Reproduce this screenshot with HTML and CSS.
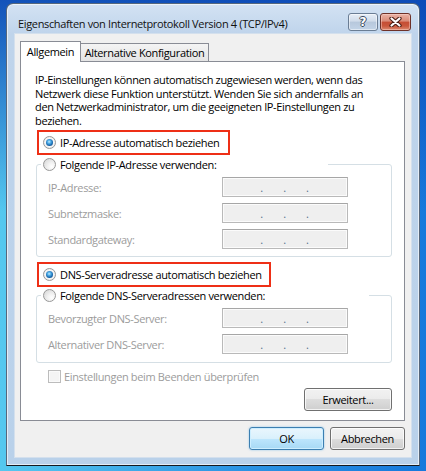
FILE: index.html
```html
<!DOCTYPE html>
<html lang="de">
<head>
    <meta charset="UTF-8">
    <meta name="viewport" content="width=device-width, initial-scale=1.0">
    <title>Eigenschaften von Internetprotokoll Version 4 (TCP/IPv4)</title>
    <link rel="stylesheet" href="styles.css">
</head>
<body>
    <div class="window">
        <div class="titlebar">
            <span class="title">Eigenschaften von Internetprotokoll Version 4 (TCP/IPv4)</span>
            <div class="caption-buttons">
                <button class="cap-btn help">?</button>
                <button class="cap-btn close">
                    <svg width="13" height="10" viewBox="0 0 13 10">
                        <path d="M2.5 1.5 L10.5 8.5 M10.5 1.5 L2.5 8.5" stroke="#4a1c14" stroke-width="4.2" stroke-linecap="round"/>
                        <path d="M2.5 1.5 L10.5 8.5 M10.5 1.5 L2.5 8.5" stroke="#ffffff" stroke-width="2.2" stroke-linecap="round"/>
                    </svg>
                </button>
            </div>
        </div>

        <div class="client">
            <div class="tabs">
                <div class="tab active">Allgemein</div>
                <div class="tab">Alternative Konfiguration</div>
            </div>

            <div class="panel">
                <p class="intro">
                    IP-Einstellungen können automatisch zugewiesen werden, wenn das<br>
                    Netzwerk diese Funktion unterstützt. Wenden Sie sich andernfalls an<br>
                    den Netzwerkadministrator, um die geeigneten IP-Einstellungen zu<br>
                    beziehen.
                </p>

                <div class="mark mark-ip">
                    <label class="option"><span class="radio on"></span>IP-Adresse automatisch beziehen</label>
                </div>

                <div class="group">
                    <label class="option group-title title-ip"><span class="radio"></span>Folgende IP-Adresse verwenden:</label>
                    <div class="field">
                        <span class="field-label">IP-Adresse:</span>
                        <span class="ip-box"><i>.</i><i>.</i><i>.</i></span>
                    </div>
                    <div class="field">
                        <span class="field-label">Subnetzmaske:</span>
                        <span class="ip-box"><i>.</i><i>.</i><i>.</i></span>
                    </div>
                    <div class="field">
                        <span class="field-label">Standardgateway:</span>
                        <span class="ip-box"><i>.</i><i>.</i><i>.</i></span>
                    </div>
                </div>

                <div class="mark mark-dns">
                    <label class="option"><span class="radio on"></span>DNS-Serveradresse automatisch beziehen</label>
                </div>

                <div class="group group-dns">
                    <label class="option group-title title-dns"><span class="radio"></span>Folgende DNS-Serveradressen verwenden:</label>
                    <div class="field">
                        <span class="field-label">Bevorzugter DNS-Server:</span>
                        <span class="ip-box"><i>.</i><i>.</i><i>.</i></span>
                    </div>
                    <div class="field">
                        <span class="field-label">Alternativer DNS-Server:</span>
                        <span class="ip-box"><i>.</i><i>.</i><i>.</i></span>
                    </div>
                </div>

                <label class="check-row"><span class="checkbox"></span>Einstellungen beim Beenden überprüfen</label>

                <div class="panel-actions">
                    <button class="btn btn-wide">Erweitert...</button>
                </div>
            </div>

            <div class="dialog-actions">
                <button class="btn default">OK</button>
                <button class="btn">Abbrechen</button>
            </div>
        </div>
    </div>
</body>
</html>
```

FILE: styles.css
```css
* {
    box-sizing: border-box;
}

body {
    margin: 0;
    width: 426px;
    height: 471px;
    overflow: hidden;
    padding: 3px 0 0 6px;
    font-family: 'Open Sans', 'Noto Sans', sans-serif;
    font-size: 11px;
    letter-spacing: -0.35px;
    color: #000;
    background:
        linear-gradient(to bottom, rgba(12, 70, 180, 0.9) 0%, rgba(12, 70, 180, 0) 45%),
        linear-gradient(to right, #55c8ef 0%, #2d95e4 55%, #1679dc 100%);
}

.window {
    width: 414px;
    height: 463px;
    display: flex;
    flex-direction: column;
    padding: 0 7px 7px 7px;
    border: 1px solid #56677c;
    border-bottom-color: #151a20;
    border-radius: 7px 7px 0 0;
    background: linear-gradient(#d3e2f3, #bfd4eb 30px, #b9d1ea);
    box-shadow: inset 0 0 0 1px rgba(255, 255, 255, 0.6);
}

/* title bar */
.titlebar {
    height: 29px;
    display: flex;
    justify-content: space-between;
    align-items: flex-start;
    padding-right: 1px;
}

.title {
    padding: 12px 0 0 4px;
    line-height: 15px;
    color: #111;
    white-space: nowrap;
}

.caption-buttons {
    display: flex;
    gap: 2px;
    padding-top: 9px;
}

.cap-btn {
    height: 18px;
    padding: 0;
    border-radius: 3px;
    display: flex;
    align-items: center;
    justify-content: center;
}

.help {
    width: 30px;
    border: 1px solid #6a7d94;
    background: linear-gradient(#e6eef7, #d0dcea 45%, #b7c8dc 50%, #c2d4e7);
    box-shadow: inset 0 0 0 1px rgba(255, 255, 255, 0.5);
    font-family: 'DejaVu Sans', sans-serif;
    font-weight: bold;
    font-size: 12px;
    color: #fff;
    text-shadow: 1px 0 #3b4a5e, -1px 0 #3b4a5e, 0 1px #3b4a5e, 0 -1px #3b4a5e;
}

.close {
    width: 31px;
    border: 1px solid #6e3128;
    background: linear-gradient(#eab3a6, #d98a77 45%, #c54d34 50%, #c9573c 75%, #dc8c73);
    box-shadow: inset 0 0 0 1px rgba(255, 220, 210, 0.45);
}

/* client area */
.client {
    flex: 1;
    background: #f0f0f0;
    border: 1px solid #d4e0ed;
    padding: 7px 6px 7px 5px;
}

.tabs {
    display: flex;
    align-items: flex-start;
    height: 21px;
    position: relative;
    z-index: 1;
}

.tab {
    height: 18px;
    margin-top: 2px;
    margin-left: -1px;
    width: 129px;
    text-align: center;
    line-height: 17px;
    white-space: nowrap;
    border: 1px solid #898c95;
    border-bottom: none;
    background: linear-gradient(#f4f4f4, #ececec 50%, #e4e4e4);
}

.tab.active {
    height: 21px;
    width: 61px;
    margin: 0;
    line-height: 20px;
    background: #fff;
    position: relative;
    z-index: 1;
}

.panel {
    height: 360px;
    margin-top: -1px;
    background: #fff;
    border: 1px solid #898c95;
}

.intro {
    margin: 11px 0 0 14px;
    line-height: 13.5px;
    white-space: nowrap;
}

.option {
    display: flex;
    align-items: center;
    gap: 4px;
    height: 14px;
    white-space: nowrap;
}

.radio {
    width: 13px;
    height: 13px;
    flex: none;
    display: grid;
    place-items: center;
    border-radius: 50%;
    border: 1px solid #989898;
    background: radial-gradient(circle at 70% 70%, #ffffff 0, #f2f2f2 35%, #d2d2d2 100%);
}

.radio.on {
    background: radial-gradient(circle at 50% 50%, #ffffff 0, #f4f4f4 60%, #dcdcdc 100%);
}

.radio.on::after {
    content: "";
    width: 7px;
    height: 7px;
    border-radius: 50%;
    background: radial-gradient(circle at 45% 40%, #c4ebff 0, #4eace6 30%, #1462a8 65%, #0c3f70 100%);
}

/* red annotation frames */
.mark {
    display: flex;
    align-items: center;
    height: 25px;
    margin-left: 16px;
    padding-left: 4px;
    border: 2px solid #ee2f16;
}

.mark-ip {
    width: 193px;
    margin-top: 3px;
}

.mark-dns {
    width: 234px;
    margin-top: 5px;
}

.group {
    margin: 9px 12px 0 15px;
    padding: 0 0 7px 11px;
    border: 1px solid #d5dfe5;
    border-radius: 3px;
}

.group-dns {
    margin-top: 8px;
    padding-bottom: 8px;
}

.group-title {
    margin: -8px 0 0 -7px;
    padding-left: 2px;
    background: #fff;
}

.title-ip {
    width: 287px;
}

.title-dns {
    width: 328px;
}

.field {
    display: flex;
    align-items: center;
    height: 20px;
    margin-top: 6px;
    color: #9c9c9c;
}

.field-label {
    width: 174px;
}

.ip-box {
    width: 126px;
    height: 20px;
    display: flex;
    justify-content: space-evenly;
    padding: 0 18px 0 17px;
    line-height: 20px;
    border: 1px solid #b9b9b9;
    border-top-color: #a6a6a6;
    background: #efefef;
    box-shadow: inset 0 0 0 1px #fbfbfb;
    color: #56708c;
}

.ip-box i {
    font-style: normal;
}

.check-row {
    display: flex;
    align-items: center;
    gap: 3px;
    height: 13px;
    margin: 7px 0 0 27px;
    color: #9c9c9c;
}

.checkbox {
    width: 13px;
    height: 13px;
    border: 1px solid #bcbcbc;
    background: #f4f4f4;
    box-shadow: inset 0 0 0 1px #fafafa;
}

.panel-actions {
    display: flex;
    justify-content: flex-end;
    margin: 5px 12px 0 0;
}

.btn {
    width: 75px;
    height: 23px;
    padding: 0;
    font-family: 'Open Sans', 'Noto Sans', sans-serif;
    font-size: 11px;
    letter-spacing: -0.35px;
    color: #000;
    border: 1px solid #707070;
    border-radius: 3px;
    background: linear-gradient(#f2f2f2 0, #ebebeb 50%, #dddddd 50%, #cfcfcf 100%);
    box-shadow: inset 0 0 0 1px rgba(255, 255, 255, 0.75);
}

.btn-wide {
    width: 88px;
}

.btn.default {
    border-color: #3c7fb1;
    background: linear-gradient(#eaf6fd 0, #d9f0fc 50%, #bee6fd 50%, #a7d9f5 100%);
    box-shadow: inset 0 0 0 1px #cdeeff, 0 0 2px rgba(60, 160, 230, 0.6);
}

.dialog-actions {
    display: flex;
    justify-content: flex-end;
    gap: 6px;
    margin-top: 6px;
}
```
